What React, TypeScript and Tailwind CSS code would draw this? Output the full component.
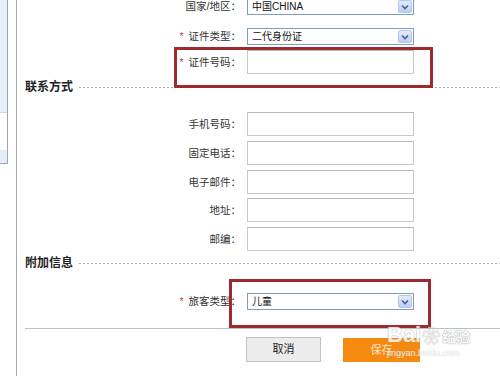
import React from "react";

const Chevron = () => (
  <svg width="8" height="6" viewBox="0 0 8 6">
    <path d="M1 1.5 L4 4.5 L7 1.5" fill="none" stroke="#4d6185" strokeWidth="1.6" />
  </svg>
);

const Select = ({ value }: { value: string }) => (
  <div className="w-[167px] h-[17px] border border-[#7f9db9] bg-white flex items-center">
    <span className="flex-1 pl-[4px] text-[10px] leading-none text-[#111]">{value}</span>
    <span className="w-[14px] h-[13px] mr-px rounded-[2px] border border-[#b5c6ec] bg-gradient-to-b from-[#e3ebfd] to-[#bccdf5] flex items-center justify-center">
      <Chevron />
    </span>
  </div>
);

const Input = () => (
  <div className="w-[167px] h-[24px] border border-[#c8c8c8] border-t-[#b8b8b8] bg-white" />
);

const Row = ({
  label,
  required,
  children,
  className = "",
}: {
  label: string;
  required?: boolean;
  children: React.ReactNode;
  className?: string;
}) => (
  <div className={`flex items-center ${className}`}>
    <div className="w-[216px] text-right text-[10.5px] leading-none text-[#333]">
      {required && <span className="text-[#c4415f] mr-[5px]">*</span>}
      {label}：
    </div>
    <div className="ml-[6px]">{children}</div>
  </div>
);

const Heading = ({ title, className = "" }: { title: string; className?: string }) => (
  <div className={`flex items-center h-[14px] ${className}`}>
    <span className="text-[12px] font-bold leading-none text-[#222]">{title}</span>
    <div className="flex-1 ml-[6px] h-px bg-[repeating-linear-gradient(90deg,#a8a8a8_0_2px,transparent_2px_4px)]" />
  </div>
);

export default function App() {
  return (
    <div className="relative w-[500px] h-[376px] overflow-hidden bg-white flex font-['Liberation_Sans','Noto_Sans_CJK_SC',sans-serif]">
      <aside className="w-[8px] h-[164px] shrink-0 border-r border-b border-[#9ba7b3] flex flex-col">
        <div className="h-[113px] bg-[#eaf0f9] border-b border-[#cfd8e3]" />
        <div className="h-[37px] bg-white" />
        <div className="flex-1 bg-[#e5ecf6]" />
      </aside>
      <div className="w-[8px] shrink-0" />
      <main className="flex-1 border-l border-[#a3acb5] pl-[8px] flex flex-col">
        <Row label="国家/地区" className="mt-[-2px] h-[17px]">
          <Select value="中国CHINA" />
        </Row>
        <Row label="证件类型" required className="mt-[13px] h-[17px]">
          <Select value="二代身份证" />
        </Row>
        <Row label="证件号码" required className="mt-[5px] h-[24px]">
          <Input />
        </Row>

        <Heading title="联系方式" className="mt-[6px]" />

        <Row label="手机号码" className="mt-[18px] h-[24px]">
          <Input />
        </Row>
        <Row label="固定电话" className="mt-[5px] h-[24px]">
          <Input />
        </Row>
        <Row label="电子邮件" className="mt-[5px] h-[24px]">
          <Input />
        </Row>
        <Row label="地址" className="mt-[4px] h-[24px]">
          <Input />
        </Row>
        <Row label="邮编" className="mt-[5px] h-[24px]">
          <Input />
        </Row>

        <Heading title="附加信息" className="mt-[5px]" />

        <Row label="旅客类型" required className="mt-[23px] h-[17px]">
          <Select value="儿童" />
        </Row>

        <div className="mt-[18px] border-t border-[#b3c3c6]" />

        <div className="flex items-start mt-[8px] ml-[221px]">
          <button className="w-[75px] h-[25px] border border-[#c2c2c2] bg-[#ececec] text-[11px] text-[#222]">
            取消
          </button>
          <button className="ml-[22px] mt-px w-[77px] h-[24px] bg-[#f6890f] text-[11px] text-[#fde7cc]">
            保存
          </button>
        </div>
      </main>

      {/* annotation boxes */}
      <div className="absolute left-[174px] top-[47px] w-[259px] h-[41px] border-[3px] border-[#9e2a2e]" />
      <div className="absolute left-[229px] top-[279px] w-[202px] h-[49px] border-[3px] border-[#9e2a2e]" />

      {/* watermark */}
      <div className="absolute left-[387px] top-[324px] flex flex-col opacity-80 pointer-events-none">
        <div className="flex items-end">
          <span className="text-[22px] font-bold leading-none text-white [text-shadow:0_0_1px_#999,0_0_1px_#999]">
            Bai
          </span>
          <span className="ml-px text-[18px] leading-none text-white [text-shadow:0_0_1px_#999,0_0_1px_#999]">
            ❀
          </span>
          <span className="ml-[2px] mb-[2px] text-[14px] font-bold leading-none text-white [text-shadow:0_0_1px_#888,0_0_1px_#888]">
            经验
          </span>
        </div>
        <span className="mt-[3px] text-[9px] leading-none text-white [text-shadow:0_0_1px_#aaa]">
          jingyan.baidu.com
        </span>
      </div>
    </div>
  );
}
